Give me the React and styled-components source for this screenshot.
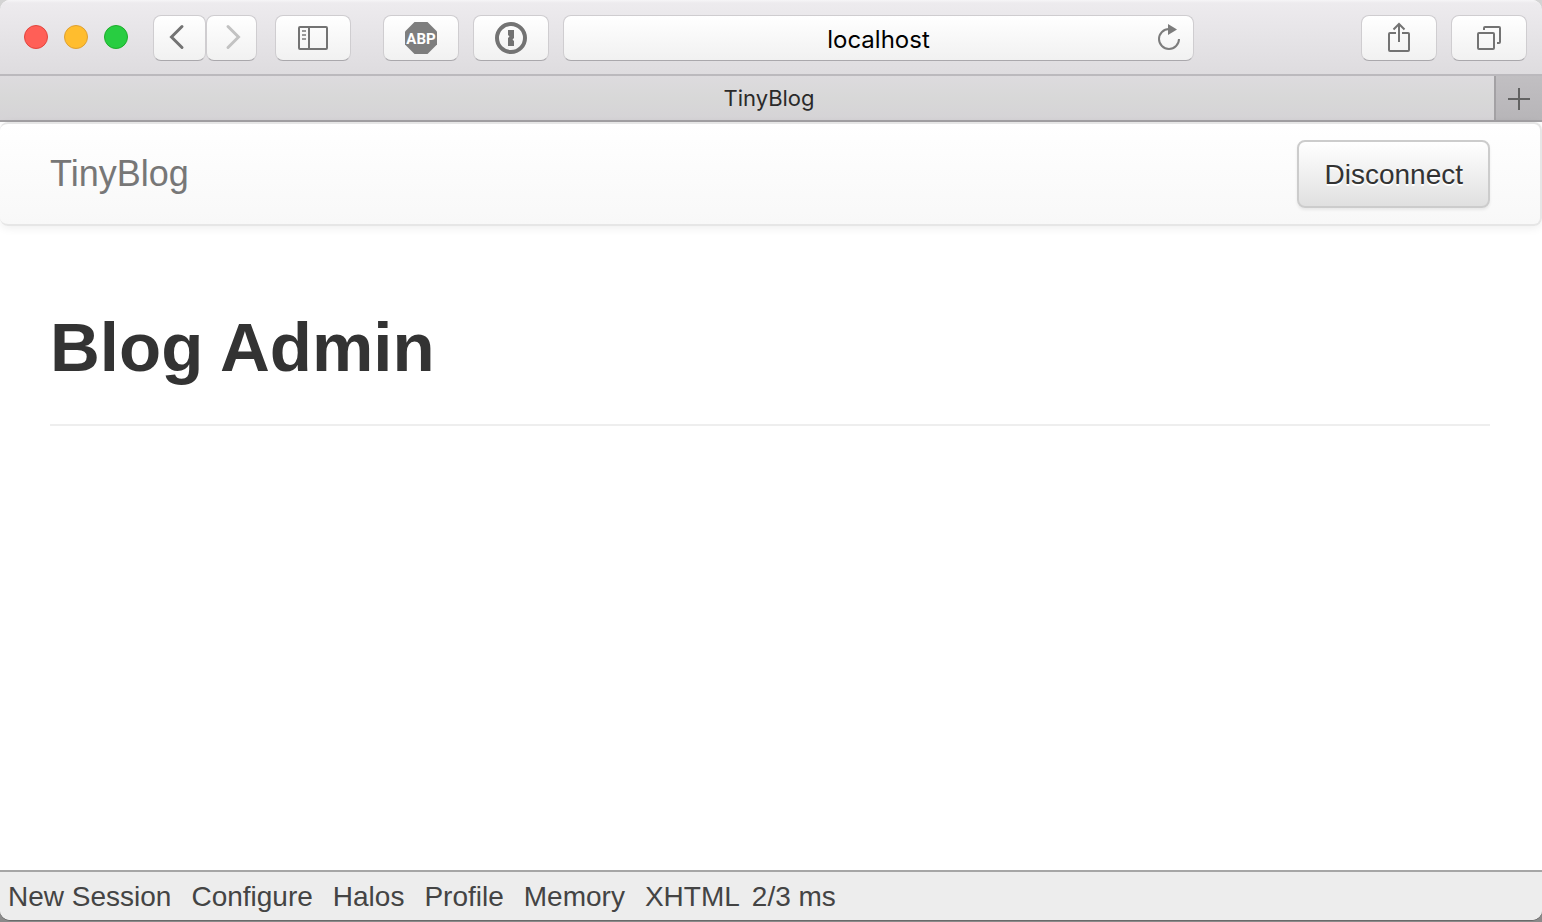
import React from "react";
import styled, { createGlobalStyle } from "styled-components";

const GlobalStyle = createGlobalStyle`
  *, *::before, *::after { box-sizing: border-box; }
  body { margin: 0; background: linear-gradient(#d4d4d4, #8a8a8a); }
  button, input { font: inherit; margin: 0; }
`;

const Window = styled.div`
  min-height: calc(100vh - 2px);
  display: flex;
  flex-direction: column;
  margin-bottom: 2px;
  background: #fff;
  border-radius: 10px;
  overflow: hidden;
  box-shadow: 0 1px 0 #6a6a6a;
  font-family: "Liberation Sans", Arial, sans-serif;
`;

const Toolbar = styled.header`
  display: flex;
  align-items: flex-start;
  height: 76px;
  padding: 15px 15px 0 24px;
  background: linear-gradient(#f6f5f7 0, #edebee 3px, #dedcdf 100%);
  border-bottom: 2px solid #bbb9bd;
`;

const Lights = styled.div`
  display: flex;
  gap: 16px;
  margin: 10px 25px 0 0;
`;

const Light = styled.button`
  width: 24px;
  height: 24px;
  padding: 0;
  border: 1px solid ${(p) => p.$edge};
  border-radius: 50%;
  background: ${(p) => p.$fill};
`;

const Group = styled.div`
  display: flex;
  gap: ${(p) => p.$gap ?? 14}px;
  margin-right: ${(p) => p.$after ?? 0}px;
`;

const ToolButton = styled.button`
  display: flex;
  align-items: center;
  justify-content: center;
  width: ${(p) => p.$width ?? 76}px;
  height: 46px;
  padding: 0;
  border: 1px solid #cfcdd0;
  border-bottom-color: #aaa8ac;
  border-radius: 8px;
  background: linear-gradient(#fff, #f1f1f1);
  color: #737373;
`;

const Address = styled.div`
  position: relative;
  flex: 1;
  min-width: 0;
  margin-right: 167px;
`;

const AddressInput = styled.input`
  display: block;
  width: 100%;
  height: 46px;
  padding: 2px 50px 0;
  border: 1px solid #cfcdd0;
  border-bottom-color: #aaa8ac;
  border-radius: 8px;
  background: linear-gradient(#fff, #f1f1f1);
  color: #000;
  font-family: Inter, sans-serif;
  font-size: 24px;
  text-align: center;
`;

const Reload = styled.button`
  position: absolute;
  top: 9px;
  right: 11px;
  width: 30px;
  height: 30px;
  padding: 0;
  border: 0;
  background: none;
  color: #7c7c7c;
`;

const TabBar = styled.div`
  display: flex;
  height: 46px;
  border-bottom: 2px solid #a3a1a4;
`;

const Tab = styled.button`
  flex: 1;
  padding: 0 0 0 44px;
  border: 0;
  background: linear-gradient(#dddbde, #d8d8d8 50%, #d5d3d6);
  color: #2a2a2a;
  font-family: Inter, sans-serif;
  font-size: 22px;
  line-height: 44px;
`;

const NewTab = styled.button`
  display: flex;
  align-items: center;
  justify-content: center;
  width: 48px;
  padding: 2px 0 0;
  border: 0;
  border-left: 2px solid #a3a1a4;
  background: linear-gradient(#c1bfc2, #b7b5b8);
  color: #626262;
`;

const Navbar = styled.nav`
  display: flex;
  align-items: center;
  justify-content: space-between;
  height: 104px;
  padding: 0 50px;
  border: 2px solid #e6e6e6;
  border-left: 0;
  border-radius: 8px;
  background: linear-gradient(#fff, #f8f8f8);
  box-shadow: 0 2px 10px rgba(0, 0, 0, 0.07);
`;

const Brand = styled.a`
  color: #777;
  font-size: 36px;
  line-height: 40px;
  text-decoration: none;
`;

const Disconnect = styled.button`
  padding: 13px 25px 11px;
  border: 2px solid #ccc;
  border-radius: 8px;
  background: linear-gradient(#fff, #e0e0e0);
  box-shadow: 0 2px 3px rgba(0, 0, 0, 0.07);
  color: #333;
  font-size: 28px;
  line-height: 40px;
  text-shadow: 0 2px 0 #fff;
`;

const Main = styled.main`
  flex: 1;
  padding: 82px 52px 0 50px;
`;

const Title = styled.h1`
  margin: 0;
  padding-bottom: 36px;
  border-bottom: 2px solid #eee;
  color: #333;
  font-size: 69px;
  font-weight: 700;
  line-height: 80px;
`;

const Footer = styled.footer`
  display: flex;
  gap: 20px;
  height: 50px;
  padding: 0 8px;
  border-top: 2px solid #a6a6a6;
  background: #ededed;
  color: #444;
  font-size: 28px;
  line-height: 50px;
  white-space: nowrap;
`;

const FooterLink = styled.a`
  color: inherit;
  text-decoration: none;
`;

const Timing = styled.span`
  margin-left: -8px;
`;

const Icon = ({ w, h, children }) => (
  <svg width={w} height={h} viewBox={`0 0 ${w} ${h}`} fill="none" stroke="currentColor" strokeWidth="2" aria-hidden="true">
    {children}
  </svg>
);

const AbpIcon = styled.svg`
  font-family: Roboto, sans-serif;
  font-size: 15px;
  font-weight: 700;
`;

const links = ["New Session", "Configure", "Halos", "Profile", "Memory", "XHTML"];

export default function App() {
  return (
    <>
      <GlobalStyle />
      <Window>
        <Toolbar>
          <Lights>
            <Light aria-label="Close" $fill="#ff5f57" $edge="#e2453e" />
            <Light aria-label="Minimize" $fill="#ffbd2e" $edge="#dea032" />
            <Light aria-label="Zoom" $fill="#28cd41" $edge="#1dad2b" />
          </Lights>
          <Group $gap={0} $after={18}>
            <ToolButton $width={53} aria-label="Back">
              <Icon w={30} h={30}>
                <path d="M17 3.500 6.500 14 17 24.500" strokeWidth="3" strokeLinecap="round" />
              </Icon>
            </ToolButton>
            <ToolButton $width={51} aria-label="Forward">
              <Icon w={30} h={30}>
                <path d="M11 3.500 21.500 14 11 24.500" stroke="#c2c2c2" strokeWidth="3" strokeLinecap="round" />
              </Icon>
            </ToolButton>
          </Group>
          <Group $after={32}>
            <ToolButton aria-label="Show sidebar">
              <Icon w={30} h={24}>
                <rect x="1" y="1" width="28" height="22" rx="1" />
                <path d="M11 1v22" />
                <path d="M4 5h4M4 9h4M4 13h4" stroke="#999" />
              </Icon>
            </ToolButton>
          </Group>
          <Group $after={14}>
            <ToolButton aria-label="Adblock Plus">
              <AbpIcon width="32" height="32" viewBox="0 0 32 32" aria-hidden="true">
                <path d="M9.500 0h13L32 9.500v13L22.500 32h-13L0 22.500v-13z" fill="#7e7e7e" />
                <text x="16" y="22" textAnchor="middle" fill="#fff">ABP</text>
              </AbpIcon>
            </ToolButton>
            <ToolButton aria-label="1Password">
              <Icon w={32} h={32}>
                <circle cx="16" cy="16" r="14" strokeWidth="4" />
                <path d="M13 8h6v8l-1.500 1.500L19 19v5h-6v-8l1.500-1.500L13 13z" fill="currentColor" stroke="none" />
              </Icon>
            </ToolButton>
          </Group>
          <Address>
            <AddressInput type="text" aria-label="Address" defaultValue="localhost" />
            <Reload aria-label="Reload">
              <Icon w={30} h={30}>
                <path d="M26 15a10 10 0 1 1-10-10" />
                <path d="M15 0v11l9-5.500z" fill="currentColor" stroke="none" />
              </Icon>
            </Reload>
          </Address>
          <Group>
            <ToolButton aria-label="Share">
              <Icon w={24} h={32}>
                <path d="M9 11H3q-1 0-1 1v16q0 1 1 1h18q1 0 1-1V12q0-1-1-1h-6" />
                <path d="M12 20V2M6.500 7.500 12 2l5.500 5.500" />
              </Icon>
            </ToolButton>
            <ToolButton aria-label="Show all tabs">
              <Icon w={24} h={24}>
                <rect x="1" y="7" width="16" height="16" rx="1" />
                <path d="M7 4V2q0-1 1-1h14q1 0 1 1v14q0 1-1 1h-2" />
              </Icon>
            </ToolButton>
          </Group>
        </Toolbar>
        <TabBar>
          <Tab>TinyBlog</Tab>
          <NewTab aria-label="New tab">
            <Icon w={22} h={22}>
              <path d="M11 0v22M0 11h22" />
            </Icon>
          </NewTab>
        </TabBar>
        <Navbar>
          <Brand href="#">TinyBlog</Brand>
          <Disconnect>Disconnect</Disconnect>
        </Navbar>
        <Main>
          <Title>Blog Admin</Title>
        </Main>
        <Footer>
          {links.map((label) => (
            <FooterLink key={label} href="#">{label}</FooterLink>
          ))}
          <Timing>2/3 ms</Timing>
        </Footer>
      </Window>
    </>
  );
}
